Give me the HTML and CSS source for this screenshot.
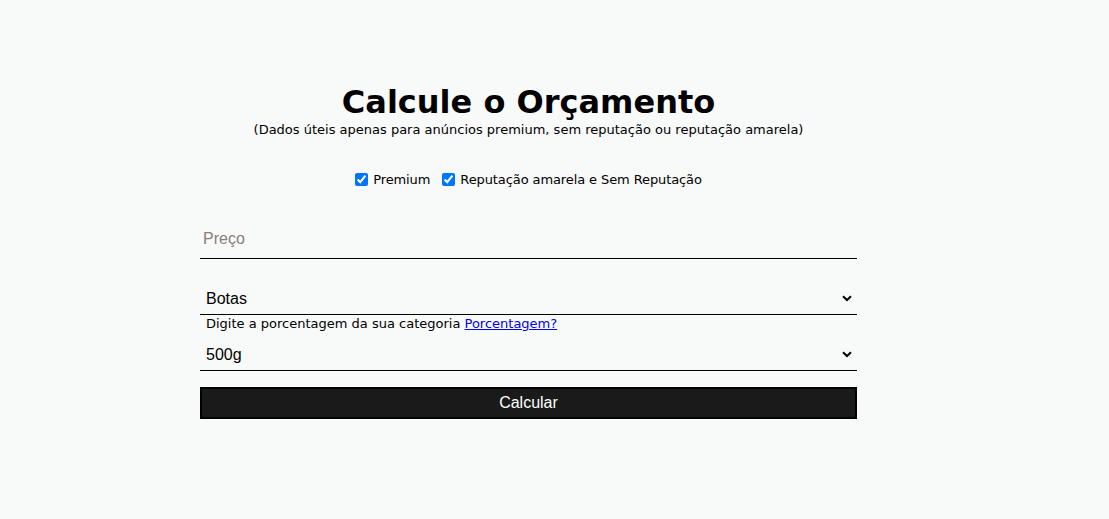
FILE: index.html
```html
<!DOCTYPE html>
<html lang="pt-BR">
<head>
<meta charset="utf-8">
<title>Calcule o Orçamento</title>
<link rel="stylesheet" href="styles.css">
</head>
<body>
<main class="page">
  <header class="head">
    <h1 class="title">Calcule o Orçamento</h1>
    <p class="subtitle">(Dados úteis apenas para anúncios premium, sem reputação ou reputação amarela)</p>
  </header>
  <div class="checks">
    <label class="check"><input type="checkbox" checked> Premium</label>
    <label class="check"><input type="checkbox" checked> Reputação amarela e Sem Reputação</label>
  </div>
  <form class="form">
    <input class="field" type="text" placeholder="Preço">
    <div class="select-wrap first">
      <select class="field select">
        <option>Botas</option>
      </select>
      <svg class="chev" width="10" height="7" viewBox="0 0 10 7"><path d="M1 1.2 L5 5 L9 1.2" fill="none" stroke="#000" stroke-width="2"/></svg>
    </div>
    <p class="hint">Digite a porcentagem da sua categoria <a href="#">Porcentagem?</a></p>
    <div class="select-wrap">
      <select class="field select">
        <option>500g</option>
      </select>
      <svg class="chev" width="10" height="7" viewBox="0 0 10 7"><path d="M1 1.2 L5 5 L9 1.2" fill="none" stroke="#000" stroke-width="2"/></svg>
    </div>
    <button class="btn" type="button">Calcular</button>
  </form>
</main>
</body>
</html>
```
FILE: styles.css
```css
html, body {
  margin: 0;
  padding: 0;
  background: #f8f9f9;
}
body {
  font-family: "DejaVu Sans", Verdana, sans-serif;
  color: #000;
}
.page {
  width: 657px;
  margin: 0 0 0 200px;
  padding-top: 82px;
}
.head {
  text-align: center;
}
.title {
  margin: 0;
  font-size: 32px;
  font-weight: bold;
  line-height: 40px;
}
.subtitle {
  margin: 0;
  font-size: 13px;
  line-height: 16px;
}
.checks {
  display: flex;
  justify-content: center;
  gap: 12px;
  margin-top: 34px;
  font-size: 13px;
  letter-spacing: -0.1px;
}
.check {
  display: flex;
  align-items: center;
  gap: 3px;
}
.check input {
  margin: 0 2px 0 0;
  width: 13px;
  height: 13px;
}
.form {
  display: flex;
  flex-direction: column;
  margin-top: 33px;
}
.field {
  font-family: "Liberation Sans", Arial, sans-serif;
  font-size: 16px;
  box-sizing: border-box;
  width: 100%;
  border: none;
  border-bottom: 1px solid #000;
  background: transparent;
  outline: none;
  color: #000;
}
input.field {
  height: 39px;
  padding: 0 3px;
}
input.field::placeholder {
  color: #8a7f78;
}
.select-wrap {
  position: relative;
}
.select-wrap.first {
  margin-top: 17px;
}
.select {
  appearance: none;
  -webkit-appearance: none;
  height: 39px;
  padding: 6px 6px 0;
  border-radius: 0;
}
.chev {
  position: absolute;
  right: 5px;
  top: 19px;
  pointer-events: none;
}
.hint {
  margin: 1px 0 0 0;
  padding-left: 6px;
  font-size: 13px;
  line-height: 16px;
}
.hint a {
  color: #0000ee;
}
.btn {
  margin-top: 16px;
  height: 32px;
  background: #1a1a1a;
  border: 2px solid #000;
  color: #fff;
  font-family: "Liberation Sans", Arial, sans-serif;
  font-size: 16px;
  padding: 0;
}
```
